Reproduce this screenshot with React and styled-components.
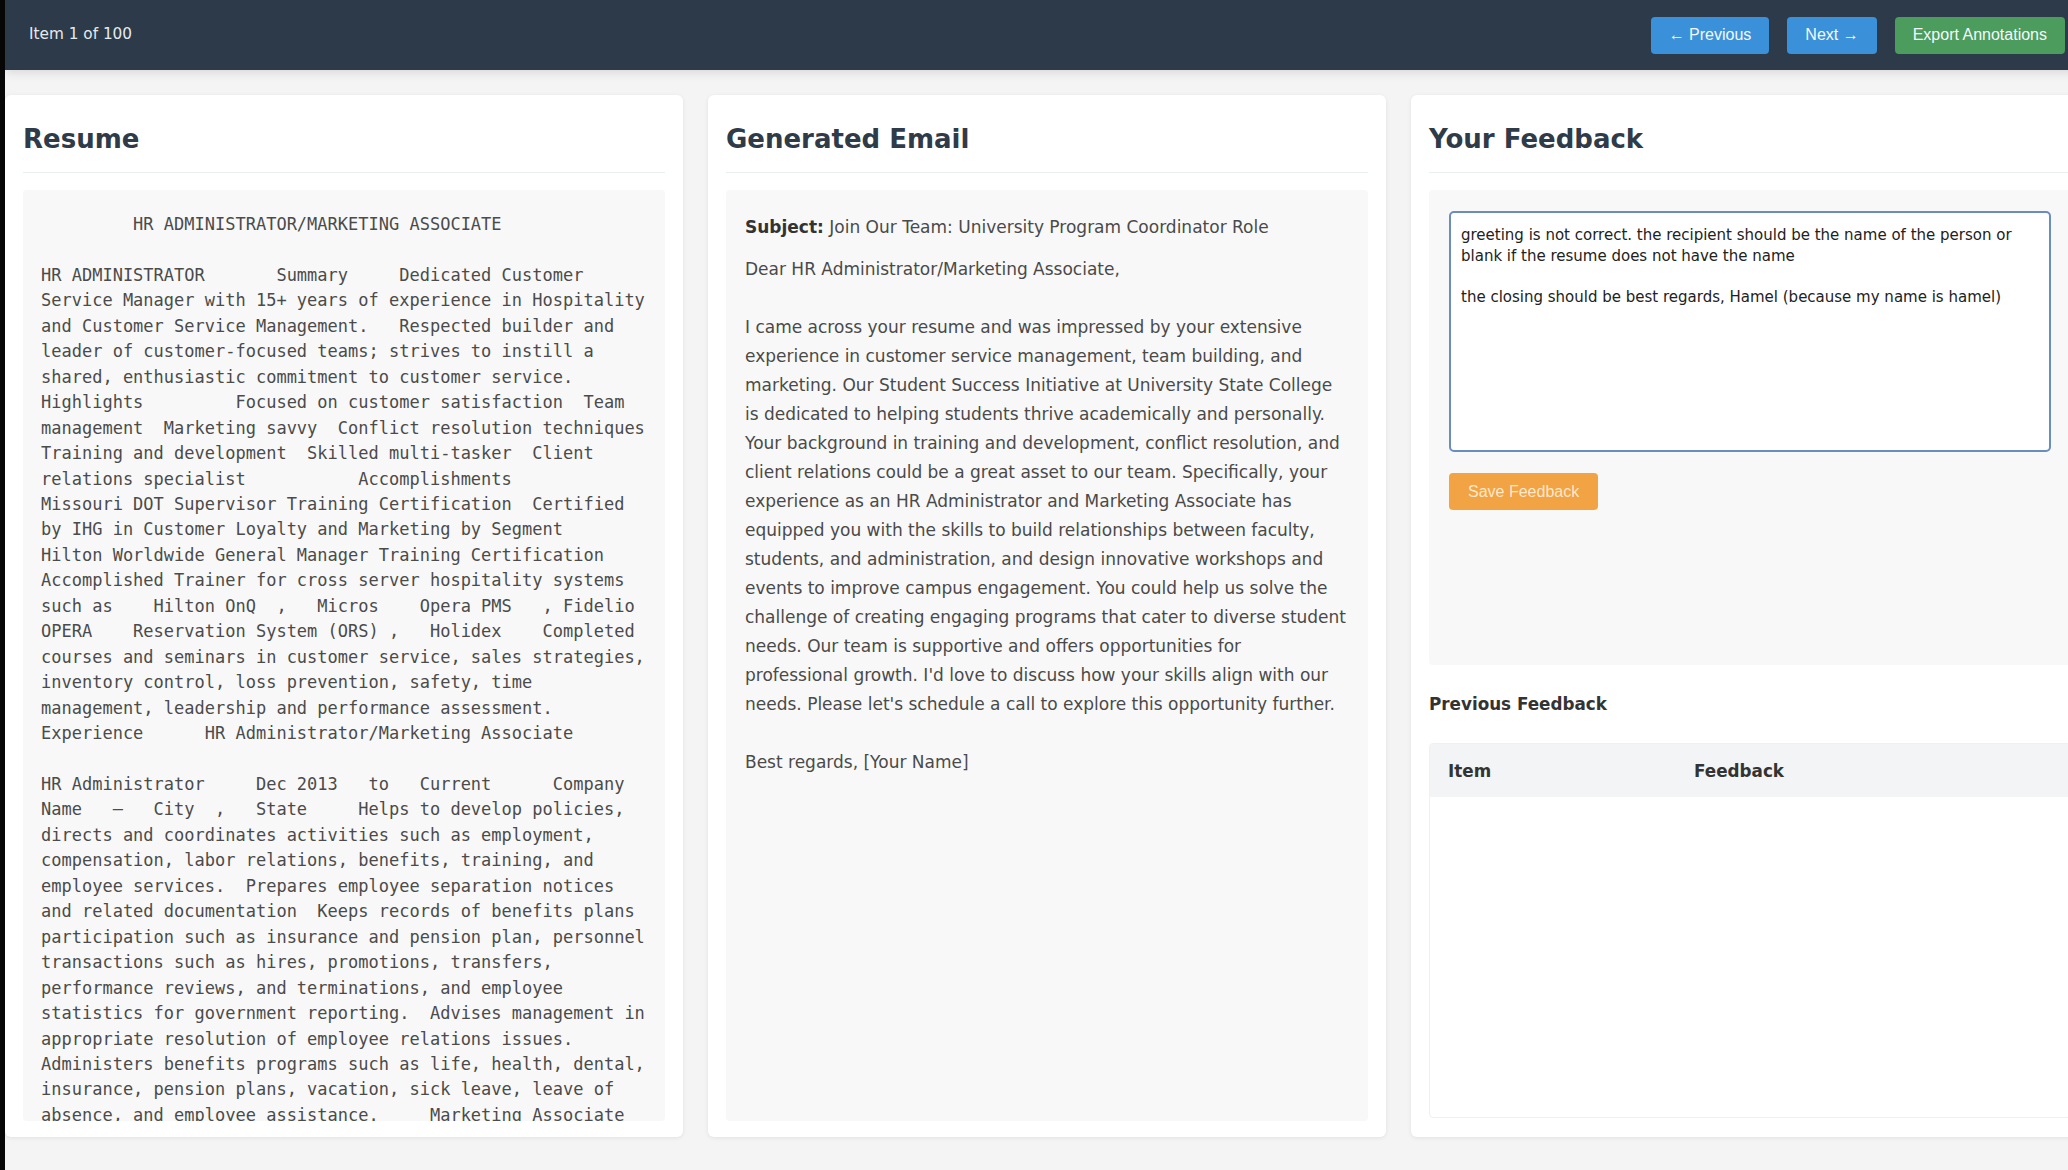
import React from 'react';
import styled, { createGlobalStyle } from 'styled-components';

const GlobalStyle = createGlobalStyle`
  * { box-sizing: border-box; }
  html, body {
    margin: 0;
    padding: 0;
    height: 100%;
    overflow: hidden;
    background: #f4f4f4;
  }
  body {
    font-family: "DejaVu Sans", Verdana, sans-serif;
  }
`;

const Frame = styled.div`
  width: 2090px;
  height: 100vh;
  border-left: 5px solid #070707;
  display: flex;
  flex-direction: column;
  background: #f4f4f4;
`;

const TopBar = styled.header`
  height: 70px;
  flex-shrink: 0;
  display: flex;
  align-items: center;
  justify-content: space-between;
  padding: 0 25px 0 24px;
  background: #2c3a49;
  box-shadow: 0 2px 10px rgba(0, 0, 0, 0.12);
  position: relative;
  z-index: 1;
`;

const Counter = styled.span`
  font-size: 15.3px;
  color: #e6eaee;
  margin-top: -2px;
`;

const Actions = styled.div`
  display: flex;
  gap: 18px;
`;

const Button = styled.button`
  height: 37px;
  padding: 0 18px;
  border: none;
  border-radius: 4px;
  background: ${(p) => p.$bg};
  color: ${(p) => p.$fg || '#f4f8fc'};
  font-family: "Liberation Sans", Arial, sans-serif;
  font-size: 16px;
  cursor: pointer;
`;

const Columns = styled.main`
  flex: 1;
  min-height: 0;
  display: grid;
  grid-template-columns: repeat(3, 678px);
  column-gap: 25px;
  padding: 25px 0 33px;
`;

const Card = styled.section`
  min-height: 0;
  display: flex;
  flex-direction: column;
  padding: 20px 18px 16px;
  background: #fff;
  border-radius: 6px;
  box-shadow: 0 1px 4px rgba(0, 0, 0, 0.08);
`;

const CardTitle = styled.h2`
  margin: 9px 0 0;
  padding-bottom: 17px;
  border-bottom: 1px solid #eceff1;
  font-size: 26px;
  line-height: 31px;
  font-weight: 700;
  color: #2f3b48;
`;

const Panel = styled.div`
  margin-top: 17px;
  flex: ${(p) => (p.$fixed ? 'none' : '1')};
  height: ${(p) => (p.$fixed ? `${p.$fixed}px` : 'auto')};
  min-height: 0;
  padding: ${(p) => p.$pad || '21px 18px'};
  background: #f8f8f8;
  border-radius: 4px;
  overflow-y: auto;
  scrollbar-width: none;
  &::-webkit-scrollbar { display: none; }
`;

const ResumeText = styled.pre`
  margin: 0;
  font-family: "DejaVu Sans Mono", "Liberation Mono", monospace;
  font-size: 17px;
  line-height: 25.45px;
  color: #4b4b4b;
  white-space: pre;
`;

const Subject = styled.p`
  margin: 0 0 13px;
  font-size: 17px;
  line-height: 29px;
  color: #4a4a4a;

  strong {
    color: #333;
  }
`;

const EmailBody = styled.div`
  font-size: 17px;
  line-height: 29px;
  color: #4a4a4a;
  white-space: pre;
`;

const FeedbackInput = styled.textarea`
  display: block;
  width: 100%;
  height: 241px;
  padding: 12px 10px 10px;
  border: 2px solid #6a8dbf;
  border-radius: 5px;
  background: #fff;
  font-family: "DejaVu Sans", Verdana, sans-serif;
  font-size: 15px;
  line-height: 20.7px;
  color: #222;
  resize: none;
  outline: none;
`;

const SaveButton = styled(Button)`
  margin-top: 21px;
  padding: 0 19px;
`;

const SectionLabel = styled.h3`
  margin: 29px 0;
  font-size: 16.8px;
  line-height: 20px;
  font-weight: 700;
  color: #333;
`;

const TableWrap = styled.div`
  flex: 1;
  min-height: 0;
  margin-bottom: 3px;
  border: 1px solid #eef0f1;
  border-radius: 4px;
  background: #fff;
  overflow: hidden;
`;

const Table = styled.table`
  width: 100%;
  border-collapse: collapse;
`;

const Th = styled.th`
  height: 53px;
  width: ${(p) => p.$w || 'auto'};
  padding: 0 18px;
  text-align: left;
  background: #f2f4f5;
  font-size: 16.8px;
  font-weight: 700;
  color: #333;
`;

const resume = [
  '         HR ADMINISTRATOR/MARKETING ASSOCIATE',
  '',
  'HR ADMINISTRATOR       Summary     Dedicated Customer',
  'Service Manager with 15+ years of experience in Hospitality',
  'and Customer Service Management.   Respected builder and',
  'leader of customer-focused teams; strives to instill a',
  'shared, enthusiastic commitment to customer service.',
  'Highlights         Focused on customer satisfaction  Team',
  'management  Marketing savvy  Conflict resolution techniques',
  'Training and development  Skilled multi-tasker  Client',
  'relations specialist           Accomplishments',
  'Missouri DOT Supervisor Training Certification  Certified',
  'by IHG in Customer Loyalty and Marketing by Segment',
  'Hilton Worldwide General Manager Training Certification',
  'Accomplished Trainer for cross server hospitality systems',
  'such as    Hilton OnQ  ,   Micros    Opera PMS   , Fidelio',
  'OPERA    Reservation System (ORS) ,   Holidex    Completed',
  'courses and seminars in customer service, sales strategies,',
  'inventory control, loss prevention, safety, time',
  'management, leadership and performance assessment.',
  'Experience      HR Administrator/Marketing Associate',
  '',
  'HR Administrator     Dec 2013   to   Current      Company',
  'Name   \u2013   City  ,   State     Helps to develop policies,',
  'directs and coordinates activities such as employment,',
  'compensation, labor relations, benefits, training, and',
  'employee services.  Prepares employee separation notices',
  'and related documentation  Keeps records of benefits plans',
  'participation such as insurance and pension plan, personnel',
  'transactions such as hires, promotions, transfers,',
  'performance reviews, and terminations, and employee',
  'statistics for government reporting.  Advises management in',
  'appropriate resolution of employee relations issues.',
  'Administers benefits programs such as life, health, dental,',
  'insurance, pension plans, vacation, sick leave, leave of',
  'absence, and employee assistance.     Marketing Associate',
].join('\n');

const email = [
  'Dear HR Administrator/Marketing Associate,',
  '',
  'I came across your resume and was impressed by your extensive',
  'experience in customer service management, team building, and',
  'marketing. Our Student Success Initiative at University State College',
  'is dedicated to helping students thrive academically and personally.',
  'Your background in training and development, conflict resolution, and',
  'client relations could be a great asset to our team. Specifically, your',
  'experience as an HR Administrator and Marketing Associate has',
  'equipped you with the skills to build relationships between faculty,',
  'students, and administration, and design innovative workshops and',
  'events to improve campus engagement. You could help us solve the',
  'challenge of creating engaging programs that cater to diverse student',
  'needs. Our team is supportive and offers opportunities for',
  "professional growth. I'd love to discuss how your skills align with our",
  "needs. Please let's schedule a call to explore this opportunity further.",
  '',
  'Best regards, [Your Name]',
].join('\n');

const feedback =
  'greeting is not correct. the recipient should be the name of the person or blank if the resume does not have the name\n\nthe closing should be best regards, Hamel (because my name is hamel)';

export default function App() {
  return (
    <>
      <GlobalStyle />
      <Frame>
        <TopBar>
          <Counter>Item 1 of 100</Counter>
          <Actions>
            <Button $bg="#3a91d9">← Previous</Button>
            <Button $bg="#3a91d9">Next →</Button>
            <Button $bg="#4b9c5d">Export Annotations</Button>
          </Actions>
        </TopBar>

        <Columns>
          <Card>
            <CardTitle>Resume</CardTitle>
            <Panel $pad="22px 18px 20px">
              <ResumeText>{resume}</ResumeText>
            </Panel>
          </Card>

          <Card>
            <CardTitle>Generated Email</CardTitle>
            <Panel $pad="23px 19px 20px">
              <Subject>
                <strong>Subject:</strong> Join Our Team: University Program Coordinator Role
              </Subject>
              <EmailBody>{email}</EmailBody>
            </Panel>
          </Card>

          <Card>
            <CardTitle>Your Feedback</CardTitle>
            <Panel $fixed={475} $pad="21px 20px">
              <FeedbackInput defaultValue={feedback} spellCheck={false} />
              <SaveButton $bg="#f2a343" $fg="rgba(255, 246, 230, 0.85)">
                Save Feedback
              </SaveButton>
            </Panel>
            <SectionLabel>Previous Feedback</SectionLabel>
            <TableWrap>
              <Table>
                <thead>
                  <tr>
                    <Th $w="246px">Item</Th>
                    <Th>Feedback</Th>
                  </tr>
                </thead>
                <tbody />
              </Table>
            </TableWrap>
          </Card>
        </Columns>
      </Frame>
    </>
  );
}
